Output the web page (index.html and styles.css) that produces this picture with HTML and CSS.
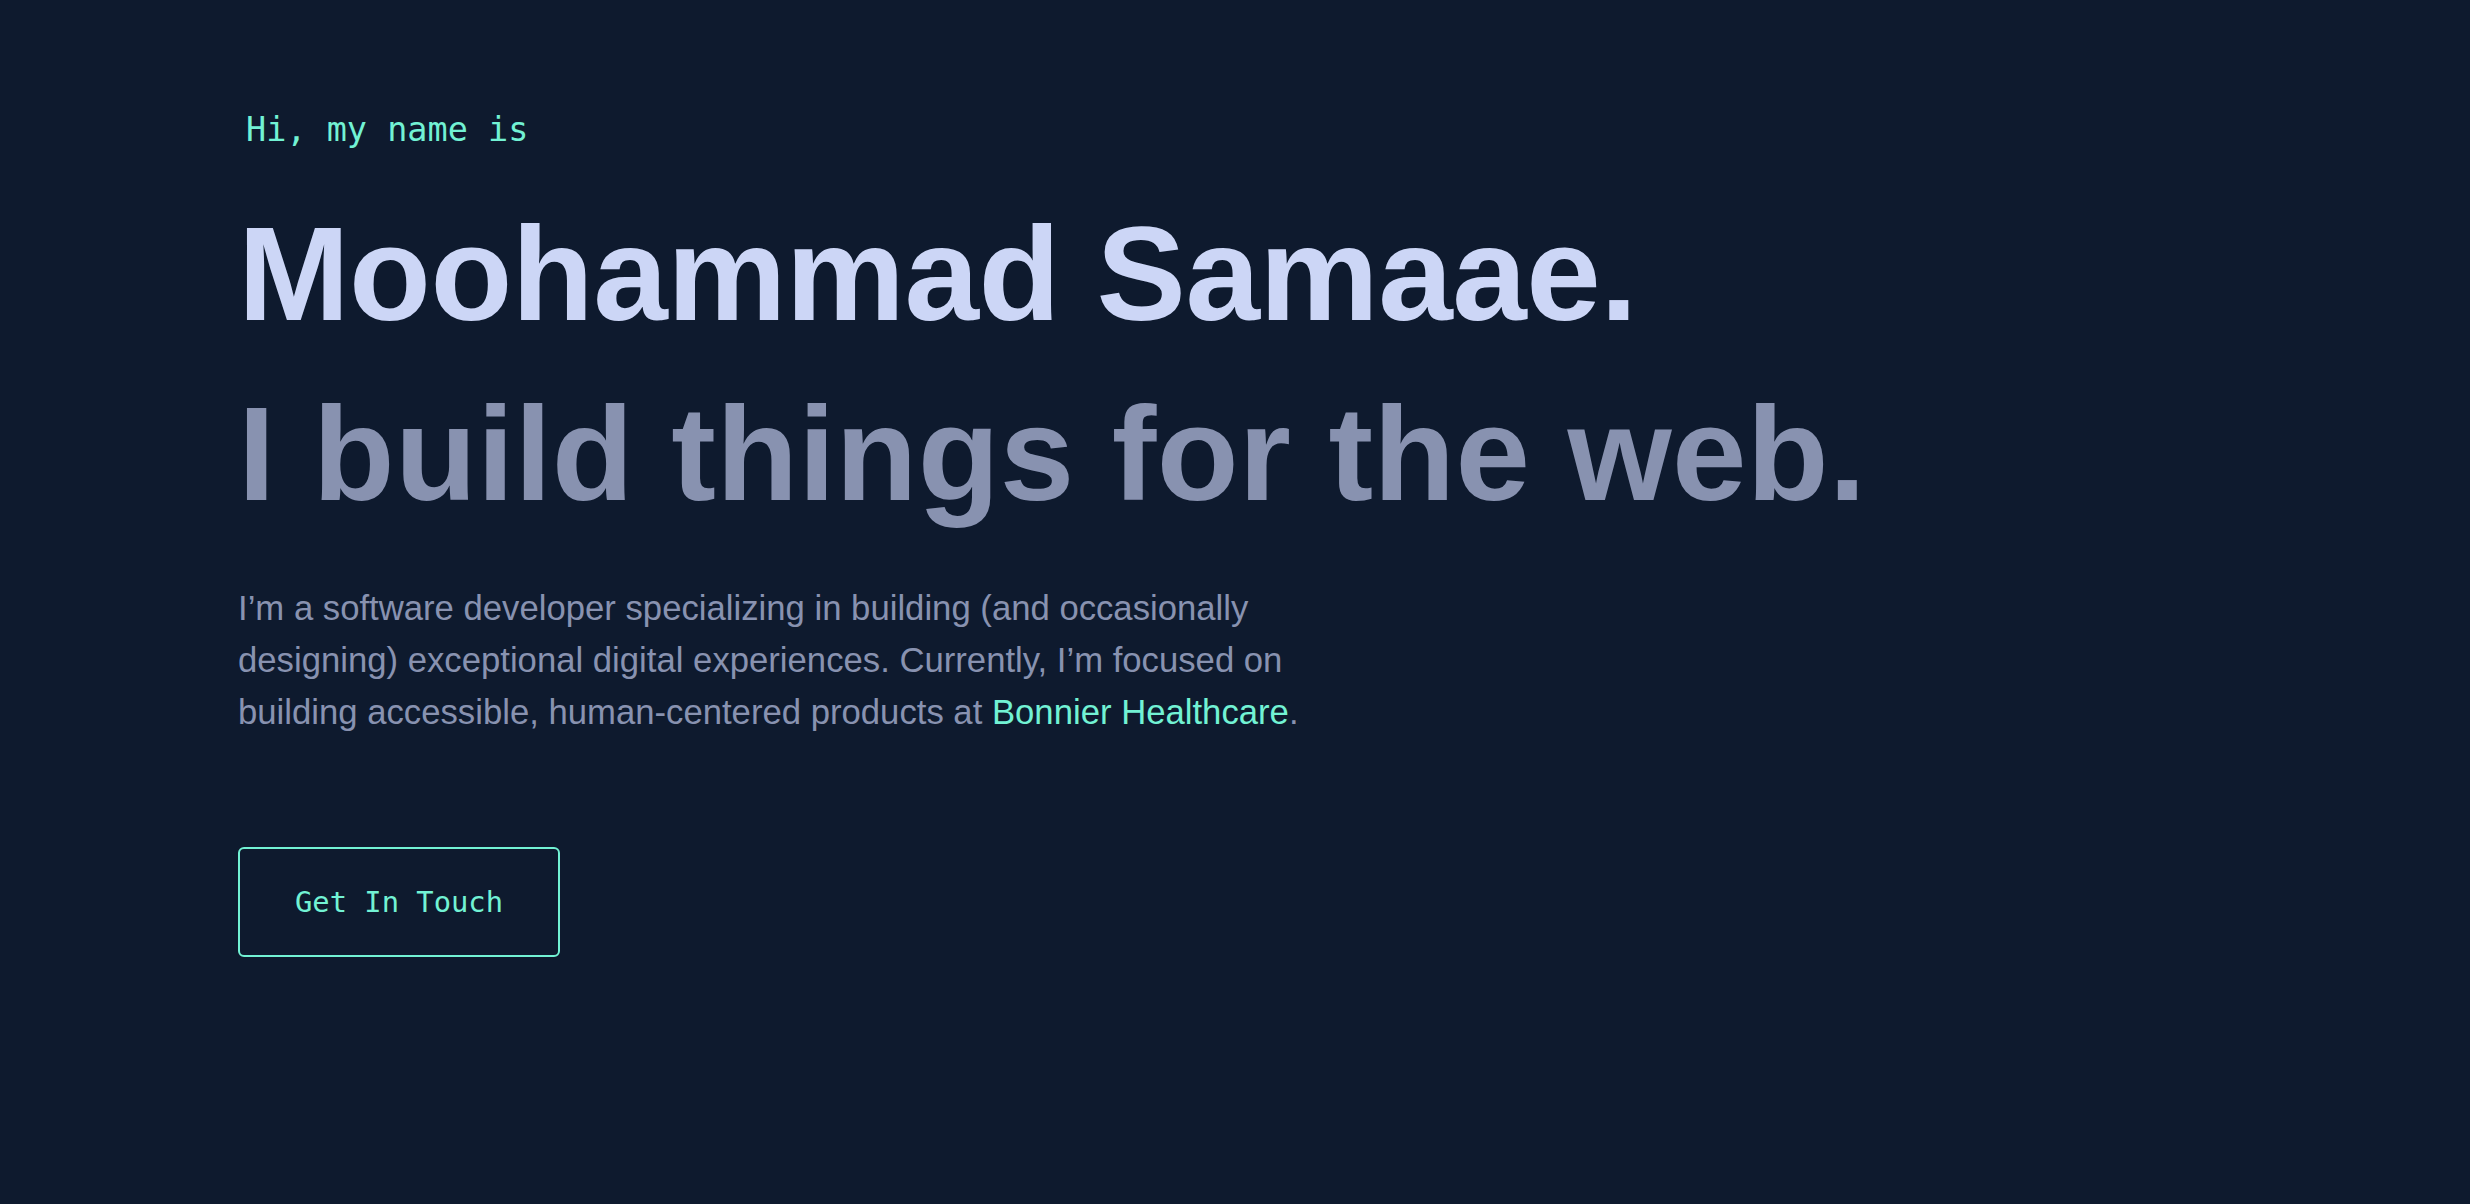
FILE: index.html
```html
<!DOCTYPE html>
<html lang="en">
<head>
<meta charset="utf-8">
<title>Moohammad Samaae</title>
<link rel="stylesheet" href="styles.css">
</head>
<body>
<main class="hero">
  <p class="overline">Hi, my name is</p>
  <h1 class="big-heading name">Moohammad Samaae.</h1>
  <h2 class="big-heading tagline">I build things for the web.</h2>
  <p class="intro">I’m a software developer specializing in building (and occasionally designing) exceptional digital experiences. Currently, I’m focused on building accessible, human-centered products at <a class="intro-link" href="#">Bonnier Healthcare</a>.</p>
  <a class="cta" href="#">Get In Touch</a>
</main>
</body>
</html>
```

FILE: styles.css
```css
html, body {
  margin: 0;
  padding: 0;
}

body {
  background: #0e1a2e;
  min-height: 1204px;
  font-family: "Liberation Sans", Arial, sans-serif;
}

.hero {
  display: flex;
  flex-direction: column;
  align-items: flex-start;
  padding: 110px 0 0 238px;
}

.overline {
  margin: 0 0 34px 8px;
  font-family: "DejaVu Sans Mono", "Liberation Mono", monospace;
  font-size: 33.5px;
  line-height: 40px;
  font-weight: 400;
  color: #72f2d4;
}

.big-heading {
  margin: 0;
  font-family: "Liberation Sans", Arial, sans-serif;
  font-weight: 700;
  font-size: 134px;
  line-height: 180px;
  white-space: nowrap;
}

.name {
  color: #ccd6f6;
  letter-spacing: -0.5px;
}

.tagline {
  color: #8892b0;
  letter-spacing: 0.2px;
}

.intro {
  margin: 38px 0 0 0;
  max-width: 1100px;
  font-size: 34.7px;
  line-height: 52px;
  color: #8892b0;
}

.intro-link {
  color: #72f2d4;
  text-decoration: none;
}

.cta {
  margin-top: 109px;
  display: inline-block;
  padding: 39px 55px;
  border: 2px solid #72f2d4;
  border-radius: 6px;
  font-family: "DejaVu Sans Mono", "Liberation Mono", monospace;
  font-size: 28.8px;
  line-height: 28px;
  color: #72f2d4;
  text-decoration: none;
}
```
